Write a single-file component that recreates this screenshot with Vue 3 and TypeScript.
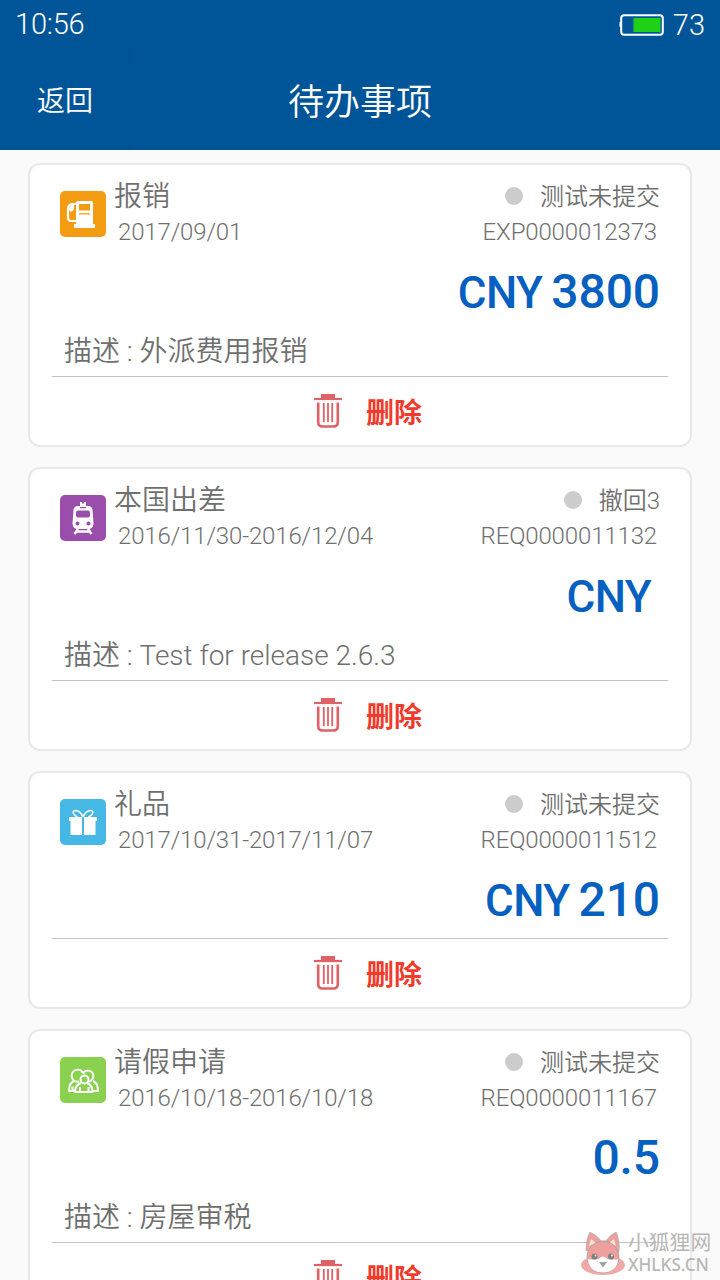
<script setup lang="ts">
type IconKind = 'fuel' | 'train' | 'gift' | 'people'

interface TodoItem {
  icon: IconKind
  title: string
  date: string
  status: string
  code: string
  currency: string
  amount: string
  description: string
}

const items: TodoItem[] = [
  { icon: 'fuel', title: '报销', date: '2017/09/01', status: '测试未提交', code: 'EXP0000012373', currency: 'CNY', amount: '3800', description: '外派费用报销' },
  { icon: 'train', title: '本国出差', date: '2016/11/30-2016/12/04', status: '撤回3', code: 'REQ0000011132', currency: 'CNY', amount: '', description: 'Test for release 2.6.3' },
  { icon: 'gift', title: '礼品', date: '2017/10/31-2017/11/07', status: '测试未提交', code: 'REQ0000011512', currency: 'CNY', amount: '210', description: '' },
  { icon: 'people', title: '请假申请', date: '2016/10/18-2016/10/18', status: '测试未提交', code: 'REQ0000011167', currency: '', amount: '0.5', description: '房屋审税' },
]
</script>

<template>
  <div class="screen">
    <header class="top">
      <div class="status-bar">
        <span class="clock">10:56</span>
        <span class="power">
          <svg width="46" height="24" viewBox="0 0 46 24">
            <rect x="2.2" y="2.2" width="41.6" height="19.6" rx="3" fill="none" stroke="#fff" stroke-width="2" />
            <rect x="0.500" y="9" width="2" height="5" fill="#fff" />
            <rect x="14.500" y="5" width="27" height="14" fill="#1fd116" />
          </svg>
          <span>73</span>
        </span>
      </div>
      <div class="nav">
        <span class="back">返回</span>
        <h1>待办事项</h1>
      </div>
    </header>

    <main class="list">
      <article v-for="item in items" :key="item.code" class="card">
        <div class="head">
          <div class="icon" :class="item.icon">
            <svg v-if="item.icon === 'fuel'" width="46" height="46" viewBox="0 0 46 46">
              <path fill="#fff" fill-rule="evenodd" d="M18 10h13q2 0 2 2v21h2v4H14v-4h2V12q0-2 2-2zM19 13v6.500h11V13zM19 22.300v1.200h11v-1.200z" />
              <path fill="none" stroke="#fff" stroke-width="2.200" stroke-linejoin="round" d="M16 13h-4q-4 1-4 5v8q0 4 3 4h5M9 19l4-5v4l-3 2" />
            </svg>
            <svg v-else-if="item.icon === 'train'" width="46" height="46" viewBox="0 0 46 46">
              <path fill="#fff" fill-rule="evenodd" d="M20 7h2v1.500h2V7h2v4h2q4 0 4.500 4l1 13q0 5-4 6h-13q-4-1-4-6l1-13q.5-4 4.500-4h2zM20 12v1.200h6V12zM18 15.500q-2 0-2 2v3q0 2 2 2h10q2 0 2-2v-3q0-2-2-2zM17.500 26.500a2 2 0 1 0 .01 0zM28.500 26.500a2 2 0 1 0 .01 0z" />
              <path fill="none" stroke="#fff" stroke-width="2.500" d="M18 34l-3.500 5M28 34l3.500 5M16.500 36.500h13" />
            </svg>
            <svg v-else-if="item.icon === 'gift'" width="46" height="46" viewBox="0 0 46 46">
              <path fill="#fff" d="M9 18h13v4H9zM24 18h13v4H24zM10.500 22H22v14H10.500zM24 22h11.500v14H24z" />
              <path fill="none" stroke="#fff" stroke-width="1.600" d="M23 18q-3-6.500-7.500-6.500-3 0-2 3 1 2 4 3.500M23 18q3-6.500 7.500-6.500 3 0 2 3-1 2-4 3.500" />
            </svg>
            <svg v-else width="46" height="46" viewBox="0 0 46 46" fill="none" stroke="#fff" stroke-width="2" stroke-linejoin="round">
              <path d="M19 24.500a6 6 0 1 1 4-8.500M27.500 24.500a5.500 5.500 0 1 0-4.500-8" />
              <path d="M14 24q-5 2-5 10h6M33 24q5 2 5 10h-6" />
              <circle cx="24.500" cy="22.500" r="4" />
              <path d="M21 26q-6 2-6 9h17.500q0-7-5.500-9M20 30v4.500M28.500 30v4.500M12.500 29.500v4" />
            </svg>
          </div>
          <div class="main">
            <div class="title">{{ item.title }}</div>
            <div class="date">{{ item.date }}</div>
          </div>
          <div class="side">
            <div class="state"><i class="dot"></i>{{ item.status }}</div>
            <div class="code">{{ item.code }}</div>
          </div>
        </div>
        <div class="amount">
          <span v-if="item.currency" class="currency">{{ item.currency }}</span>
          <span class="number">{{ item.amount }}</span>
        </div>
        <div v-if="item.description" class="desc">描述 : {{ item.description }}</div>
        <div class="action">
          <svg width="28" height="36" viewBox="0 0 28 36" fill="none" stroke="#e06067">
            <path stroke-width="2.200" d="M0 6h28" />
            <path stroke-width="4" d="M7 3h14" />
            <path stroke-width="2.600" d="M4.200 9.500V29q0 4.500 4.500 4.500h10.600q4.500 0 4.500-4.500V9.500" />
            <path stroke-width="1.800" d="M9.800 10v19M14 10v19M18.200 10v19" />
          </svg>
          <span>删除</span>
        </div>
      </article>
    </main>

    <div class="watermark">
      <svg width="44" height="46" viewBox="0 0 44 46">
        <ellipse cx="22" cy="34" rx="22" ry="10" fill="#eea19f" />
        <path d="M5 20Q5 8 9 1q8 4 11 9h5q4-6 10-9 4 8 3 20" fill="#ec9694" stroke="#aaa" stroke-width=".8" />
        <path d="M8 15l2-7 5 4zM35 15l-2-7-5 4z" fill="#f7e3cf" />
        <circle cx="22" cy="26" r="16" fill="#ec9694" stroke="#999" stroke-width=".8" />
        <path d="M6.500 28q6 1 11 0 4-5 9 0 5 1 11 0-2 13.500-15.500 13.500T6.500 28z" fill="#fff" />
        <circle cx="13.500" cy="25.500" r="3" fill="#737373" /><circle cx="30" cy="25.500" r="3" fill="#737373" />
        <circle cx="14.500" cy="24.500" r=".9" fill="#fff" /><circle cx="31" cy="24.500" r=".9" fill="#fff" />
        <path d="M18 31h8l-4 5.500z" fill="#999" />
      </svg>
      <div class="mark-text">
        <div class="mark-cn">小狐狸网</div>
        <div class="mark-en">XHLKS.CN</div>
      </div>
    </div>
  </div>
</template>

<style>
body {
  margin: 0;
  overflow: hidden;
}
</style>

<style scoped>
.screen {
  position: relative;
  width: 720px;
  height: 1280px;
  overflow: hidden;
  background: #fafafa;
  color: #6f6f6f;
  font-family: Roboto, "Noto Sans CJK SC", sans-serif;
  font-weight: 350;
  white-space: nowrap;
}
.top {
  height: 150px;
  background: #005598;
  color: #fff;
}
.status-bar {
  display: flex;
  justify-content: space-between;
  height: 50px;
  padding: 0 15px;
  font-size: 29px;
  font-weight: 300;
  line-height: 49px;
}
.clock {
  letter-spacing: -.2px;
}
.power {
  display: flex;
  align-items: center;
  gap: 8px;
}
.nav {
  display: grid;
  grid-template-columns: 130px 1fr 130px;
  grid-template-rows: 100px;
  height: 100px;
  text-align: center;
}
.back {
  box-sizing: border-box;
  border-right: 1px solid #005092;
  padding-left: 1px;
  font-size: 28px;
  line-height: 104px;
  height: 100px;
  overflow: hidden;
}
h1 {
  margin: 0;
  font-size: 36px;
  font-weight: 350;
  line-height: 107px;
}
.list {
  display: flex;
  flex-direction: column;
  gap: 20px;
  padding: 13px 28px;
}
.card {
  box-sizing: border-box;
  flex: none;
  padding: 0 22px;
  border: 2px solid #e8e8e8;
  border-radius: 12px;
  background: #fff;
}
.head {
  display: flex;
  height: 90px;
  padding: 0 8px;
}
.icon {
  width: 46px;
  height: 46px;
  margin-top: 26px;
  border-radius: 5px;
}
.icon svg {
  display: block;
}
.fuel { background: #f39c12; }
.train { background: #9b4dab; }
.gift { background: #45b8e5; }
.people { background: #8bd150; }
.main {
  flex: 1;
  padding: 13px 0 0 8px;
}
.title {
  height: 36px;
  font-size: 28px;
  line-height: 38px;
}
.date {
  padding-left: 4px;
  font-size: 24px;
  font-weight: 300;
  letter-spacing: -.14px;
  line-height: 36px;
}
.side {
  padding-top: 14px;
  text-align: right;
}
.state {
  display: flex;
  align-items: center;
  justify-content: flex-end;
  height: 35px;
  font-size: 24px;
  line-height: 38px;
}
.dot {
  width: 18px;
  height: 18px;
  margin: -1px 17px 0 0;
  border-radius: 50%;
  background: #ccc;
}
.code {
  padding-right: 3px;
  font-size: 24px;
  font-weight: 300;
  letter-spacing: -.14px;
  line-height: 36px;
}
.amount {
  display: flex;
  align-items: baseline;
  justify-content: flex-end;
  height: 75px;
  padding-right: 8px;
  color: #0560c0;
  font-weight: 500;
  line-height: 73px;
}
.currency {
  margin-right: 9px;
  font-size: 44px;
  letter-spacing: -.6px;
}
.number {
  font-size: 48px;
  letter-spacing: -.1px;
}
.number::before {
  content: "\200b";
}
.desc {
  height: 46px;
  padding-left: 12px;
  font-size: 28px;
  line-height: 43px;
}
.action {
  display: flex;
  align-items: center;
  justify-content: center;
  gap: 24px;
  height: 68px;
  border-top: 1px solid #c4c4c4;
  padding-left: 16px;
  color: #ee3b2b;
  font-size: 28px;
  font-weight: 700;
}
.watermark {
  position: absolute;
  right: 9px;
  bottom: 3px;
  display: flex;
  color: #b0b0b0;
  opacity: .9;
}
.mark-text {
  width: 83px;
  margin-left: 3px;
}
.mark-cn {
  font-size: 20.800px;
  font-weight: 400;
  line-height: 25px;
}
.mark-en {
  font-family: "Noto Sans", sans-serif;
  font-size: 17.200px;
  font-weight: 500;
  line-height: 18px;
}
</style>
